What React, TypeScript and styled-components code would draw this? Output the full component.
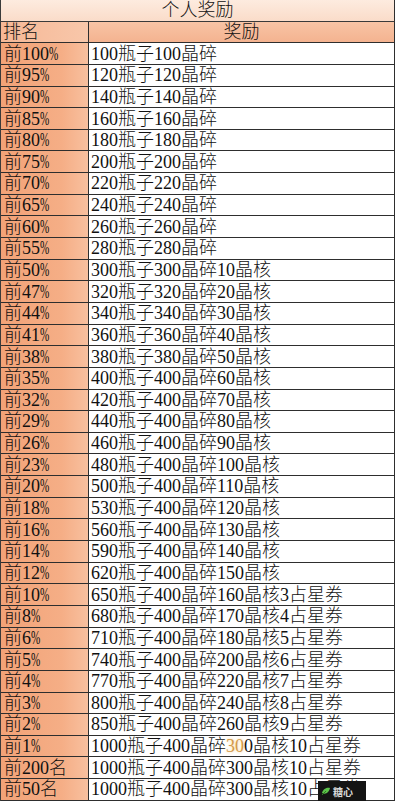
import React from "react";
import styled, { createGlobalStyle } from "styled-components";

const Global = createGlobalStyle`
  html, body { margin: 0; padding: 0; background: #ffffff; }
  body { font-family: "Liberation Serif", "Noto Sans CJK SC", serif; }
`;

const ROW = 21.65;

const Page = styled.div`
  position: relative;
  width: 400px;
  height: 801px;
  overflow: hidden;
  background: #ffffff;
`;

const Table = styled.div`
  width: 395px;
  display: grid;
  grid-template-columns: 88px 1fr;
  grid-auto-rows: ${ROW}px;
  border-left: 1px solid #3a3a3a;
  box-sizing: border-box;
  color: #111;
  font-size: 18px;
  font-weight: 300;
  line-height: 1;
`;

const Cell = styled.div`
  box-sizing: border-box;
  border-right: 1px solid #2e2e2e;
  border-bottom: 1px solid #2e2e2e;
  display: flex;
  align-items: center;
  padding-left: 2px;
  white-space: nowrap;
  overflow: hidden;
`;

const Title = styled(Cell)`
  grid-column: 1 / span 2;
  justify-content: center;
  padding-left: 0;
  border-bottom-color: #3a3a3a;
  background: linear-gradient(to bottom, #fdebdf, #fadcc9);
`;

const HeadRank = styled(Cell)`
  background: linear-gradient(to right, #f6b896, #f8c7aa);
`;

const HeadReward = styled(Cell)`
  justify-content: center;
  padding-left: 0;
  background: linear-gradient(to bottom, #f8c4a5, #f4b390);
`;

const Rank = styled(Cell)`
  padding-left: 3px;
  background: linear-gradient(to right, #f2a277, #f5ae86 70%, #f8c09f);
`;

const Reward = styled(Cell)`
  background: #ffffff;
`;

const Num = styled.span`
  font-weight: 400;
`;

const Pct = styled.span`
  display: inline-block;
  width: 9px;
  font-weight: 400;
  transform: scaleX(0.62);
  transform-origin: left center;
`;

const Glow = styled.span`
  color: #d49a4a;
  font-weight: 400;
  text-shadow: 0 0 3px #f6d28a;
`;

const Mark = styled.div`
  position: absolute;
  left: 318px;
  top: 781px;
  width: 48px;
  height: 20px;
  background: #141414;
  display: flex;
  align-items: center;
  gap: 2px;
  padding-left: 3px;
  box-sizing: border-box;
  font-family: "Noto Sans CJK SC", sans-serif;
  font-size: 10px;
  color: #d8d8d8;
  font-weight: 700;
`;

const rows: [string, string][] = [
  ["前100%", "100瓶子100晶碎"],
  ["前95%", "120瓶子120晶碎"],
  ["前90%", "140瓶子140晶碎"],
  ["前85%", "160瓶子160晶碎"],
  ["前80%", "180瓶子180晶碎"],
  ["前75%", "200瓶子200晶碎"],
  ["前70%", "220瓶子220晶碎"],
  ["前65%", "240瓶子240晶碎"],
  ["前60%", "260瓶子260晶碎"],
  ["前55%", "280瓶子280晶碎"],
  ["前50%", "300瓶子300晶碎10晶核"],
  ["前47%", "320瓶子320晶碎20晶核"],
  ["前44%", "340瓶子340晶碎30晶核"],
  ["前41%", "360瓶子360晶碎40晶核"],
  ["前38%", "380瓶子380晶碎50晶核"],
  ["前35%", "400瓶子400晶碎60晶核"],
  ["前32%", "420瓶子400晶碎70晶核"],
  ["前29%", "440瓶子400晶碎80晶核"],
  ["前26%", "460瓶子400晶碎90晶核"],
  ["前23%", "480瓶子400晶碎100晶核"],
  ["前20%", "500瓶子400晶碎110晶核"],
  ["前18%", "530瓶子400晶碎120晶核"],
  ["前16%", "560瓶子400晶碎130晶核"],
  ["前14%", "590瓶子400晶碎140晶核"],
  ["前12%", "620瓶子400晶碎150晶核"],
  ["前10%", "650瓶子400晶碎160晶核3占星券"],
  ["前8%", "680瓶子400晶碎170晶核4占星券"],
  ["前6%", "710瓶子400晶碎180晶核5占星券"],
  ["前5%", "740瓶子400晶碎200晶核6占星券"],
  ["前4%", "770瓶子400晶碎220晶核7占星券"],
  ["前3%", "800瓶子400晶碎240晶核8占星券"],
  ["前2%", "850瓶子400晶碎260晶核9占星券"],
  ["前1%", "GLOW"],
  ["前200名", "1000瓶子400晶碎300晶核10占星券"],
  ["前50名", "1000瓶子400晶碎300晶核10占星券"],
];

function splitNums(t: string) {
  return t.split(/(\d+)/).map((part, i) =>
    /^\d+$/.test(part) ? <Num key={i}>{part}</Num> : <React.Fragment key={i}>{part}</React.Fragment>
  );
}

function renderRank(r: string) {
  if (r.endsWith("%")) {
    return (
      <>
        {splitNums(r.slice(0, -1))}
        <Pct>%</Pct>
      </>
    );
  }
  return splitNums(r);
}

function renderReward(t: string) {
  if (t === "GLOW") {
    return (
      <>
        {splitNums("1000瓶子400晶碎")}
        <Glow>30</Glow>
        {splitNums("0晶核10占星券")}
      </>
    );
  }
  return splitNums(t);
}

export default function App() {
  return (
    <>
      <Global />
      <Page>
        <Table>
          <Title>个人奖励</Title>
          <HeadRank>排名</HeadRank>
          <HeadReward>奖励</HeadReward>
          {rows.map(([r, t]) => (
            <React.Fragment key={r}>
              <Rank>{renderRank(r)}</Rank>
              <Reward>{renderReward(t)}</Reward>
            </React.Fragment>
          ))}
        </Table>
        <Mark>
          <svg width="10" height="9" viewBox="0 0 10 9">
            <path d="M1 6 C2 1 7 0 9 1 C8 5 5 8 1 6 Z" fill="#5cc34a" />
            <path d="M1 8 L5 4" stroke="#2f7a22" strokeWidth="1" />
          </svg>
          <span>糖心</span>
        </Mark>
      </Page>
    </>
  );
}
